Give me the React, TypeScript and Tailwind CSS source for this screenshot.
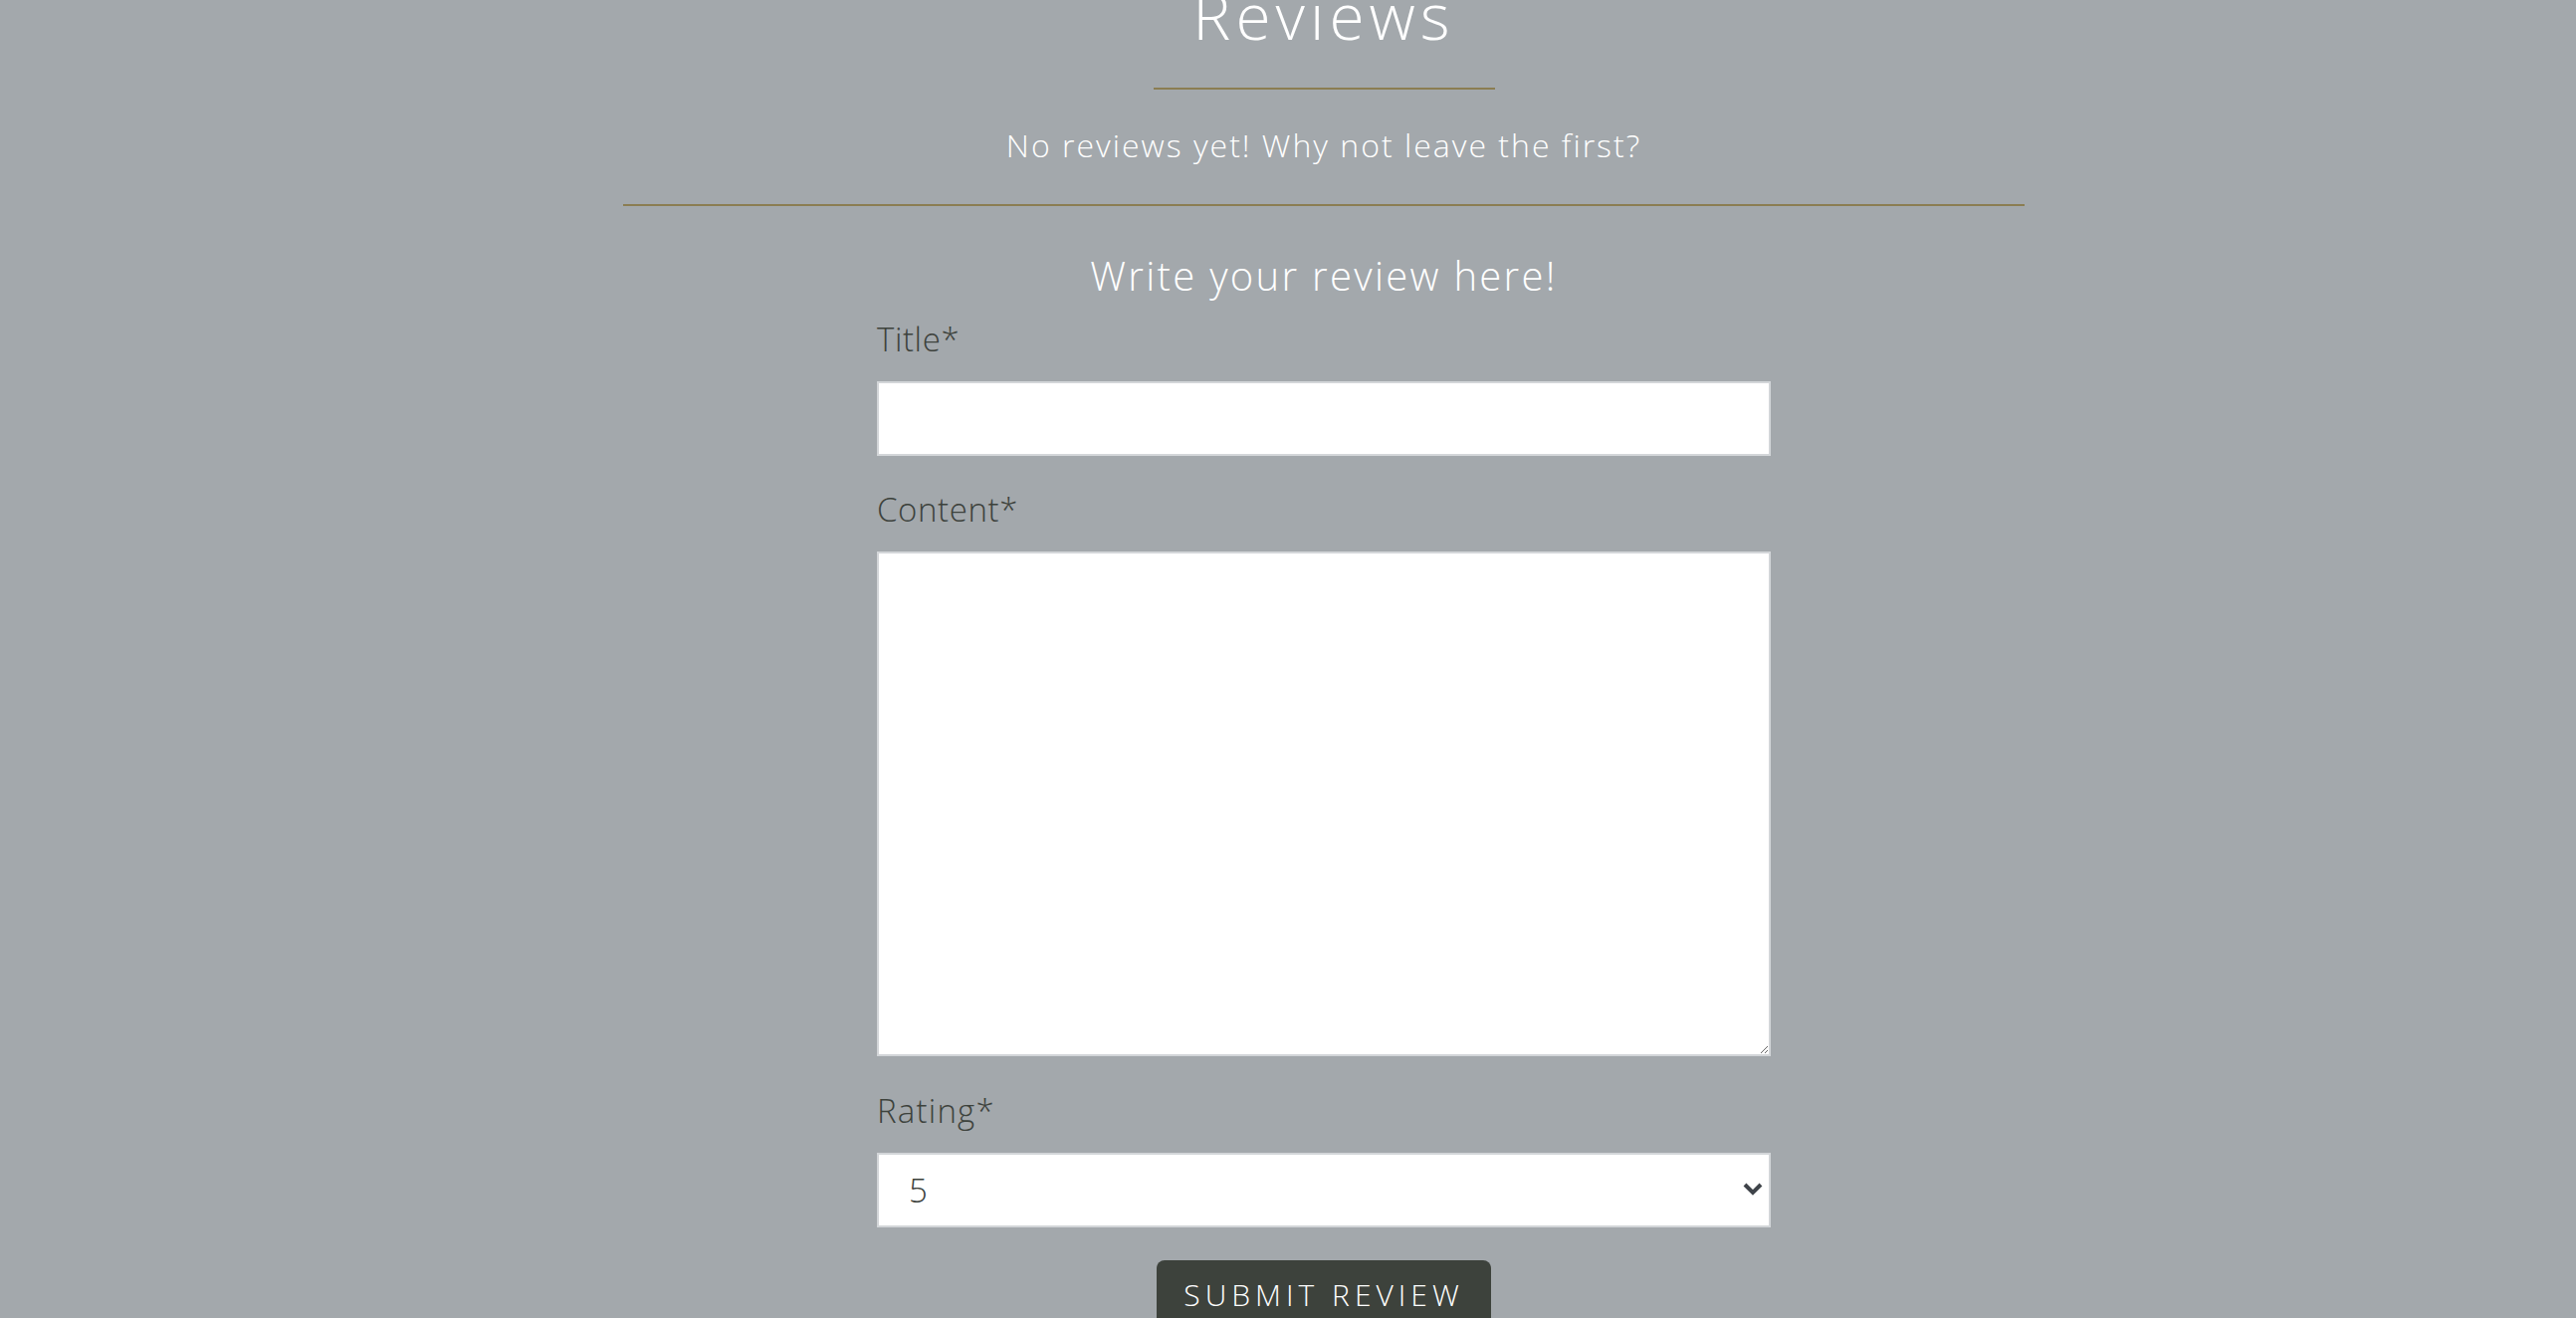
export default function App() {
  return (
    <div className="h-[1324px] overflow-hidden bg-[#a3a8ac] font-['Open_Sans',sans-serif]">
      <div className="flex flex-col items-center pl-[72px]">
        <h2 className="-mt-[16px] text-[64px] font-light leading-none tracking-[5px] text-white">Reviews</h2>
        <div className="mt-[40px] h-[2px] w-[343px] bg-[#8b7d52]" />
        <p className="mt-[40px] text-[32px] font-light leading-none tracking-[2px] text-white">
          No reviews yet! Why not leave the first?
        </p>
        <div className="mt-[43px] h-[2px] w-[1408px] bg-[#8b7d52]" />
        <h3 className="mt-[50px] text-[40px] font-light leading-none tracking-[2.3px] text-white">
          Write your review here!
        </h3>

        <form className="mt-[27px] flex w-[898px] flex-col">
          <label className="text-[33px] font-light leading-none tracking-[0.6px] text-[#3d423c]">Title*</label>
          <input
            type="text"
            className="mt-[26px] h-[75px] w-full border-2 border-[#d3d6d9] bg-white px-[30px] outline-none"
          />

          <label className="mt-[37px] text-[33px] font-light leading-none tracking-[0.6px] text-[#3d423c]">
            Content*
          </label>
          <textarea className="mt-[26px] h-[507px] w-full border-2 border-[#d3d6d9] bg-white outline-none" />

          <label className="mt-[38px] text-[33px] font-light leading-none tracking-[1.2px] text-[#3d423c]">
            Rating*
          </label>
          <div className="relative mt-[26px]">
            <select
              defaultValue="5"
              className="h-[75px] w-full appearance-none rounded-none border-2 border-[#d3d6d9] bg-white px-[30px] text-[33px] font-light text-[#3d423c] outline-none"
            >
              <option value="1">1</option>
              <option value="2">2</option>
              <option value="3">3</option>
              <option value="4">4</option>
              <option value="5">5</option>
            </select>
            <svg
              className="pointer-events-none absolute right-[8px] top-[29px] h-[14px] w-[20px]"
              viewBox="0 0 20 14"
              fill="none"
            >
              <path d="M2 3 L10 11 L18 3" stroke="#3f444a" strokeWidth="4" />
            </svg>
          </div>

          <div className="mt-[33px] flex justify-center">
            <button
              type="button"
              className="rounded-[8px] bg-[#3d423c] px-[27px] pb-[20px] pt-[20px] text-[30px] font-light leading-none tracking-[5px] text-white"
            >
              SUBMIT REVIEW
            </button>
          </div>
        </form>
      </div>
    </div>
  );
}
